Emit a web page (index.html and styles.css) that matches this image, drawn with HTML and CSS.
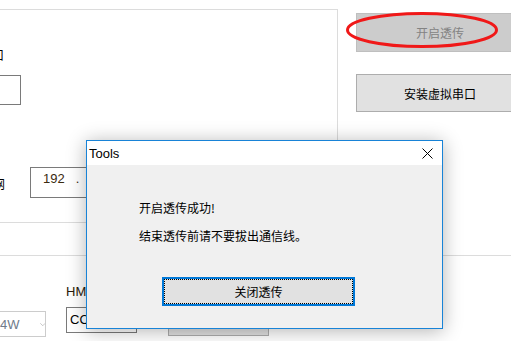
FILE: index.html
```html
<!DOCTYPE html>
<html>
	<head>
		<meta charset="utf-8" />
		<title>Tools</title>
		<link rel="stylesheet" href="styles.css">
	</head>
	<body>
		<div class="window">
			<div class="top">
				<div class="group">
					<div class="label port-label">串口</div>
					<div class="box port-box"></div>
					<div class="ip-row">
						<div class="label ip-label">以太网</div>
						<div class="box ip-box">192<span class="dot">.</span></div>
					</div>
				</div>
				<div class="side">
					<button type="button" class="btn btn-off">开启透传</button>
					<button type="button" class="btn btn-install">安装虚拟串口</button>
				</div>
			</div>

			<div class="bottom">
				<div class="combo">
					<span>4W</span>
					<svg class="chev" width="9" height="5" viewBox="0 0 9 5"><path d="M0.5 0.5 L4.5 4.5 L8.5 0.5" fill="none" stroke="#a6a6a6" stroke-width="1"/></svg>
				</div>
				<div class="hm">
					<div class="hm-label">HMI串口</div>
					<div class="box hm-box">COM1</div>
				</div>
				<button type="button" class="btn btn-hidden">连接</button>
			</div>

			<svg class="mark" width="154" height="38" viewBox="0 0 154 38">
				<ellipse cx="76" cy="18" rx="74.5" ry="16.5" fill="none" stroke="#f01818" stroke-width="3"/>
			</svg>

			<div class="dialog">
				<div class="dialog-title">
					<span>Tools</span>
					<svg width="11" height="11" viewBox="0 0 11 11"><path d="M0.5 0.5 L10.5 10.5 M10.5 0.5 L0.5 10.5" stroke="#000" stroke-width="1"/></svg>
				</div>
				<div class="dialog-body">
					<p class="msg msg-first">开启透传成功!</p>
					<p class="msg">结束透传前请不要拔出通信线。</p>
					<button type="button" class="btn btn-close">关闭透传</button>
				</div>
			</div>
		</div>
	</body>
</html>
```

FILE: styles.css
```css
html,
body {
	margin: 0;
	padding: 0;
	background: #fff;
}
.window {
	position: relative;
	width: 511px;
	height: 341px;
	overflow: hidden;
	font-family: "Liberation Sans", "Noto Sans CJK SC", sans-serif;
	font-size: 12px;
	color: #000;
}
.top {
	display: flex;
	height: 255px;
}
.group {
	box-sizing: border-box;
	flex: none;
	width: 338px;
	height: 214px;
	margin-top: 9px;
	border: 1px solid #dcdcdc;
	border-left: 0;
	padding-top: 39px;
}
.label {
	font-family: "Noto Sans CJK SC", sans-serif;
	font-size: 12px;
	line-height: 12px;
	white-space: nowrap;
}
.port-label {
	margin-left: -20px;
}
.box {
	box-sizing: border-box;
	border: 1px solid #7a7a7a;
	background: #fff;
}
.port-box {
	width: 81px;
	height: 30px;
	margin: 14px 0 0 -60px;
}
.ip-row {
	display: flex;
	align-items: center;
	margin-top: 62px;
}
.ip-label {
	margin-left: -31px;
	margin-top: 2px;
}
.ip-box {
	width: 200px;
	height: 31px;
	margin-left: 25px;
	padding: 4px 0 0 12px;
	font-size: 13px;
	line-height: 14px;
	color: #3a2a10;
}
.dot {
	margin-left: 11px;
}
.side {
	flex: none;
	display: flex;
	flex-direction: column;
	padding-left: 18px;
}
.btn {
	box-sizing: border-box;
	margin: 0;
	padding: 0;
	font-family: "Noto Sans CJK SC", sans-serif;
	font-size: 12px;
	color: #000;
	background: #e1e1e1;
	border: 1px solid #adadad;
}
.side .btn {
	width: 168px;
	flex: none;
}
.btn-off {
	height: 39px;
	margin-top: 13px;
	background: #cccccc;
	border-color: #bfbfbf;
	color: #838383;
}
.btn-install {
	height: 38px;
	margin-top: 22px;
}
.bottom {
	display: flex;
	align-items: flex-start;
	border-top: 1px solid #dcdcdc;
}
.combo {
	box-sizing: border-box;
	flex: none;
	display: flex;
	align-items: center;
	width: 106px;
	height: 26px;
	margin: 55px 0 0 -60px;
	padding-left: 59px;
	border: 1px solid #cccccc;
	font-size: 13px;
	color: #6f7b8a;
}
.chev {
	margin-left: 20px;
}
.hm {
	flex: none;
	margin: 29px 0 0 20px;
}
.hm-label {
	font-size: 13px;
	line-height: 14px;
	white-space: nowrap;
	color: #2a1a0a;
}
.hm-box {
	width: 71px;
	height: 26px;
	margin-top: 8px;
	padding: 5px 0 0 3px;
	font-size: 13px;
	line-height: 14px;
}
.btn-hidden {
	flex: none;
	width: 101px;
	height: 28px;
	margin: 52px 0 0 31px;
}
.mark {
	position: absolute;
	left: 346px;
	top: 12px;
}
.dialog {
	position: absolute;
	left: 86px;
	top: 140px;
	box-sizing: border-box;
	width: 357px;
	height: 189px;
	display: flex;
	flex-direction: column;
	border: 1px solid #1883d7;
	background: #f0f0f0;
	box-shadow: 0 2px 18px rgba(0, 0, 0, 0.3);
}
.dialog-title {
	display: flex;
	align-items: center;
	justify-content: space-between;
	height: 24px;
	padding: 0 9px 0 2px;
	background: #fff;
	font-size: 13px;
}
.dialog-title svg {
	margin-top: 1px;
}
.dialog-body {
	flex: 1;
	padding: 35px 0 0 52px;
}
.msg {
	margin: 0;
	font-family: "Noto Sans CJK SC", sans-serif;
	font-size: 12px;
	line-height: 16px;
}
.msg + .msg {
	margin-top: 12px;
}
.btn-close {
	display: block;
	width: 193px;
	height: 29px;
	margin: 33px 0 0 23px;
	border: 2px solid #0078d7;
	outline: 1px dotted #000;
	outline-offset: -3px;
}
```
